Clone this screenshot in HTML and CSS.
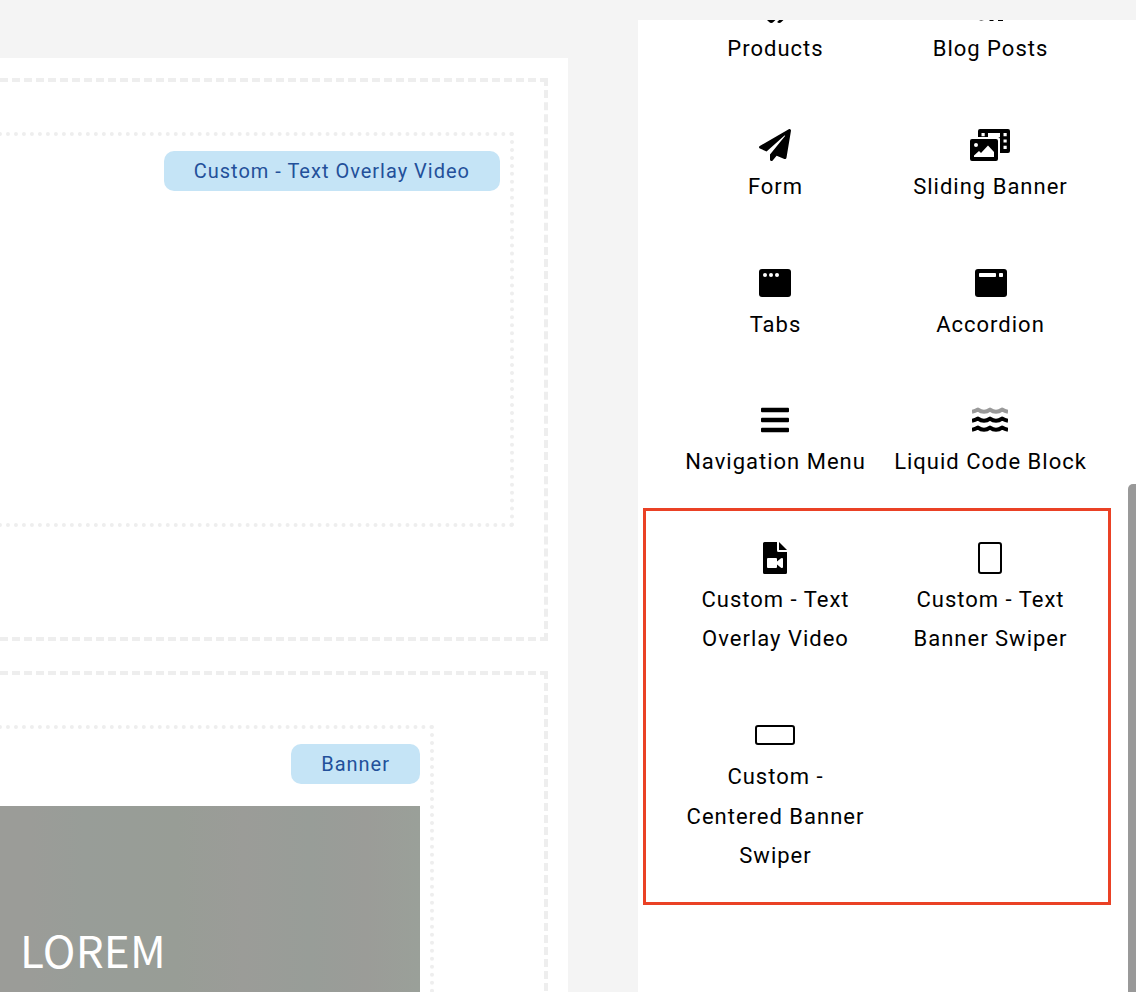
FILE: index.html
```html
<!DOCTYPE html>
<html lang="en">
<head>
<meta charset="utf-8">
<title>Page builder</title>
<link rel="stylesheet" href="styles.css">
</head>
<body>
<div class="editor">
  <main class="canvas">
    <section class="section section-video">
      <div class="block block-video"><span class="badge">Custom - Text Overlay Video</span></div>
    </section>
    <section class="section section-banner">
      <div class="block block-banner">
        <span class="badge">Banner</span>
        <div class="banner"><h2 class="banner-title">LOREM</h2></div>
      </div>
    </section>
  </main>
  <aside class="panel">
    <div class="grid">
      <div class="item">
        <div class="icon icon-raised"><svg width="40" height="32" viewBox="0 0 640 512"><path d="M497.941 225.941L286.059 14.059A48 48 0 0 0 252.118 0H48C21.49 0 0 21.49 0 48v204.118a48 48 0 0 0 14.059 33.941l211.882 211.882c18.744 18.745 49.136 18.746 67.882 0l204.118-204.118c18.745-18.745 18.745-49.137 0-67.882zM625.941 293.823L421.823 497.941c-18.745 18.745-49.137 18.745-67.882 0l-.36-.36L527.64 323.522c16.999-16.999 26.36-39.6 26.36-63.64s-9.362-46.641-26.36-63.64L331.397 0h48.721a48 48 0 0 1 33.941 14.059l211.882 211.882c18.745 18.745 18.745 49.137 0 67.882z"/></svg></div>
        <div class="label">Products</div>
      </div>
      <div class="item">
        <div class="icon icon-raised"><svg width="32" height="32" viewBox="0 0 32 32"><path d="M3 8v19a5 4 0 0 0 7 2V8zM15.500 14h4v16h-4zM24 14h5v16h-5z"/></svg></div>
        <div class="label">Blog Posts</div>
      </div>
      <div class="item">
        <div class="icon"><svg width="32" height="32" viewBox="0 0 512 512"><path d="M476 3.2L12.5 270.6c-18.1 10.4-15.8 35.6 2.2 43.2L121 358.4l287.3-253.2c5.5-4.9 13.3 2.6 8.6 8.3L176 407v80.5c0 23.6 28.5 32.9 42.5 15.8L282 426l124.6 52.2c14.2 6 30.4-2.9 33-18.2l72-432C515 7.8 493.3-6.8 476 3.2z"/></svg></div>
        <div class="label">Form</div>
      </div>
      <div class="item">
        <div class="icon"><svg width="40" height="32" viewBox="0 0 40 32"><path fill-rule="evenodd" d="M10 0H38a2 2 0 0 1 2 2V22a2 2 0 0 1-2 2H30V10a2 2 0 0 0-2-2H30V4H18V8H8V2a2 2 0 0 1 2-2zM11.500 4v3.200h3.200V4zM33.500 4v3.200h3.200V4zM33.500 10.400v3.200h3.200v-3.200zM33.500 16.800v3.200h3.200v-3.200z"/><path fill-rule="evenodd" d="M2 10H26a2 2 0 0 1 2 2V30a2 2 0 0 1-2 2H2a2 2 0 0 1-2-2V12a2 2 0 0 1 2-2zM6 14a2 2 0 1 0 0 4a2 2 0 0 0 0-4zM4 28H24V23L18 16.500L11 24L9 22L4 26.500z"/></svg></div>
        <div class="label">Sliding Banner</div>
      </div>
      <div class="item">
        <div class="icon"><svg width="32" height="28" viewBox="0 0 32 28"><rect width="32" height="28" rx="3"/><g fill="#fff"><circle cx="6" cy="6" r="2"/><circle cx="12" cy="6" r="2"/><circle cx="18" cy="6" r="2"/></g></svg></div>
        <div class="label">Tabs</div>
      </div>
      <div class="item">
        <div class="icon icon-accordion"><svg width="32" height="28" viewBox="0 0 32 28"><rect width="32" height="28" rx="3"/><g fill="#fff"><rect x="4" y="4" width="17" height="4" rx=".8"/><rect x="24" y="4" width="4" height="4" rx=".8"/></g></svg></div>
        <div class="label">Accordion</div>
      </div>
      <div class="item">
        <div class="icon icon-raised"><svg width="28" height="26" viewBox="0 0 28 26"><rect y=".7" width="28" height="4.600" rx="1"/><rect y="10.700" width="28" height="4.600" rx="1"/><rect y="20.700" width="28" height="4.600" rx="1"/></svg></div>
        <div class="label">Navigation Menu</div>
      </div>
      <div class="item">
        <div class="icon icon-raised"><svg width="36" height="26" viewBox="0 0 36 26" fill="none" stroke="#000" stroke-width="4" stroke-linejoin="round"><path stroke="#999" d="M0 4.800Q3 4.300 6 2.600Q9 4.800 12 4.800Q15 4.800 18 2.600Q21 4.800 24 4.800Q27 4.800 30 2.600Q33 4.300 36 4.800"/><path d="M0 13.800Q3 13.300 6 11.600Q9 13.800 12 13.800Q15 13.800 18 11.600Q21 13.800 24 13.800Q27 13.800 30 11.600Q33 13.300 36 13.800"/><path d="M0 22.800Q3 22.300 6 20.600Q9 22.800 12 22.800Q15 22.800 18 20.600Q21 22.800 24 22.800Q27 22.800 30 20.600Q33 22.300 36 22.800"/></svg></div>
        <div class="label">Liquid Code Block</div>
      </div>
      <div class="item">
        <div class="icon"><svg width="24" height="32" viewBox="0 0 24 32"><path d="M1.500 0H14V8.500A1.500 1.500 0 0 0 15.500 10H24V30.500A1.500 1.500 0 0 1 22.500 32H1.500A1.500 1.500 0 0 1 0 30.500V1.500A1.500 1.500 0 0 1 1.500 0zM16 0L24 8H16z"/><path fill="#fff" d="M5 16H13a1 1 0 0 1 1 1V19.500L18 16.200Q20 15.500 20 17V25Q20 26.500 18 25.800L14 22.500V25a1 1 0 0 1-1 1H5a1 1 0 0 1-1-1V17a1 1 0 0 1 1-1z"/></svg></div>
        <div class="label">Custom - Text<br>Overlay Video</div>
      </div>
      <div class="item">
        <div class="icon"><svg width="24" height="32" viewBox="0 0 24 32"><rect x="1" y="1" width="22" height="30" rx="2" fill="none" stroke="#000" stroke-width="2"/></svg></div>
        <div class="label">Custom - Text<br>Banner Swiper</div>
      </div>
      <div class="item">
        <div class="icon icon-raised"><svg width="40" height="20" viewBox="0 0 40 20"><rect x="1" y="1" width="38" height="18" rx="2" fill="none" stroke="#000" stroke-width="2"/></svg></div>
        <div class="label">Custom -<br>Centered Banner<br>Swiper</div>
      </div>
    </div>
    <div class="highlight"></div>
    <div class="scrollbar"></div>
  </aside>
</div>
</body>
</html>
```
FILE: styles.css
```css
* { box-sizing: border-box; }
body {
  margin: 0;
  background: #f4f4f4;
  font-family: Roboto, "Liberation Sans", sans-serif;
  color: #000;
}
.editor {
  display: flex;
  justify-content: space-between;
  height: 992px;
  overflow: hidden;
}
.canvas {
  width: 568px;
  margin-top: 58px;
  padding: 20px 20px 0 0;
  background: #fff;
  overflow: hidden;
}
.section {
  margin-left: -60px;
  border: 4px dashed #eee;
}
.section-video {
  height: 563px;
  margin-bottom: 30px;
  padding: 50px 30px 0;
}
.section-banner {
  height: 620px;
  padding: 50px 110px 0 30px;
}
.block {
  display: flex;
  flex-direction: column;
  align-items: flex-end;
  border: 4px dotted #eee;
  padding: 15px 10px 0 0;
}
.block-video { height: 395px; }
.block-banner { height: 500px; }
.badge {
  height: 40px;
  padding: 0 30px;
  border-radius: 10px;
  background: #c5e4f6;
  color: #23509a;
  font-size: 20px;
  line-height: 40px;
  letter-spacing: 1px;
  white-space: nowrap;
}
.banner {
  align-self: stretch;
  height: 400px;
  margin-top: 22px;
  padding: 111px 0 0 42px;
  background: linear-gradient(90deg, #9b9c98 0%, #9b9c98 12%, #989d98 24%, #989d96 45%, #9b9c98 60%, #989d98 75%, #9b9c98 88%, #9aa099 100%);
}
.banner-title {
  margin: 0;
  color: #fff;
  font-family: "Noto Sans CJK SC", sans-serif;
  font-size: 44px;
  font-weight: 400;
  line-height: 64px;
  letter-spacing: .2px;
}
.panel {
  position: relative;
  width: 498px;
  margin-top: 20px;
  background: #fff;
  overflow: hidden;
}
.grid {
  display: grid;
  grid-template-columns: 215px 215px;
  row-gap: 55px;
  margin: -34px 0 0 30px;
}
.icon {
  display: flex;
  align-items: center;
  justify-content: center;
  height: 43.2px;
  padding-right: 1px;
}
.icon svg { display: block; }
.icon-accordion { padding: 0 0 0 1px; }
.icon-raised { padding-bottom: 1px; }
.label {
  font-size: 22px;
  line-height: 39.5px;
  letter-spacing: 1px;
  text-align: center;
  white-space: nowrap;
}
.highlight {
  position: absolute;
  left: 5px;
  top: 488px;
  width: 468px;
  height: 397px;
  border: 3px solid #ea4125;
}
.scrollbar {
  position: absolute;
  right: 0;
  top: 464px;
  width: 8px;
  height: 600px;
  border-radius: 5px 0 0 0;
  background: #999;
}
```
